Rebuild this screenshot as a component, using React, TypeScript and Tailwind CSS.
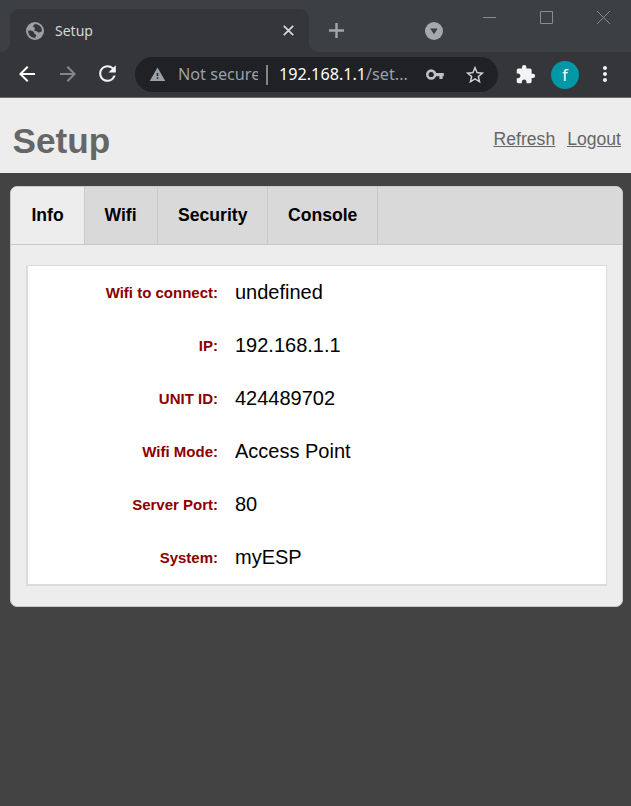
import React from "react";
import {
  MdArrowBack,
  MdArrowForward,
  MdRefresh,
  MdWarning,
  MdStarBorder,
  MdExtension,
  MdMoreVert,
} from "react-icons/md";

const tabs = [
  { name: "Info", box: "w-[74px] bg-[#ededed] pl-[20.4px]" },
  { name: "Wifi", box: "w-[73px] pl-[19.5px]" },
  { name: "Security", box: "w-[110px] pl-5" },
  { name: "Console", box: "w-[110px] pl-5" },
];

const rows: [string, string][] = [
  ["Wifi to connect:", "undefined"],
  ["IP:", "192.168.1.1"],
  ["UNIT ID:", "424489702"],
  ["Wifi Mode:", "Access Point"],
  ["Server Port:", "80"],
  ["System:", "myESP"],
];

function Globe() {
  return (
    <svg className="ml-px" width="18" height="18" viewBox="0 0 18 18">
      <circle cx="9" cy="9" r="9" fill="#9aa0a6" />
      <path
        d="M9.2 2.1C7.9 2.8 7 3.6 7.2 4.7c.2 1 1.7.5 1.9 1.5.2 1-1 1-1 1.9 0 .8.9 1 1.8 1 1.5 0 1.3 1.4 2.6 1.5 1.3.1 1.6-1.1 3.4-1.1.4-3.9-2.6-7.3-6.700-7.400z"
        fill="#35363a"
      />
      <path
        d="M2.1 8.6c1.6-.2 4.6.1 5.5 1.2.8 1 .2 1.800 1.100 2.200 1 .4 1.500.5 1.500 1.500 0 1.200-1 1.300-1 2.500C5.200 16 1.900 12.700 2.100 8.600z"
        fill="#35363a"
      />
    </svg>
  );
}

function TabStrip() {
  return (
    <div className="flex h-[52px] bg-[#3c4043]">
      <div className="flex w-[10px] bg-[#35363a]">
        <div className="w-full rounded-br-[9px] bg-[#3c4043]" />
      </div>
      <div className="mt-[9px] flex w-[299px] items-center rounded-t-[9px] bg-[#35363a] pl-[15px] pr-[15px]">
        <Globe />
        <span className="ml-[11px] flex-1 text-[14px] text-[#d5d7da]">Setup</span>
        <svg width="11" height="11" viewBox="0 0 11 11">
          <path d="M.8.8l9.4 9.4M10.2.8L.8 10.2" stroke="#d5d7da" strokeWidth="1.8" />
        </svg>
      </div>
      <div className="flex flex-1 bg-[#35363a]">
        <div className="flex flex-1 items-start rounded-bl-[9px] bg-[#3c4043]">
          <svg className="ml-[20px] mt-[23px]" width="15" height="15" viewBox="0 0 15 15">
            <path d="M7.5 0v15M0 7.5h15" stroke="#a3a6a9" strokeWidth="2.4" />
          </svg>
          <svg className="ml-[81px] mt-[22px]" width="18" height="18" viewBox="0 0 18 18">
            <circle cx="9" cy="9" r="9" fill="#a5a9ad" />
            <path d="M5.2 6.5h7.6L9 12.3z" fill="#3c4043" />
          </svg>
          <svg className="ml-[40px] mt-[11px]" width="13" height="13" viewBox="0 0 13 13">
            <path d="M0 6.5h13" stroke="#898b8d" />
          </svg>
          <svg className="ml-[44px] mt-[11px]" width="13" height="13" viewBox="0 0 13 13">
            <path d="M.5.5h12v12H.5z" fill="none" stroke="#898b8d" />
          </svg>
          <svg className="ml-[44px] mt-[11px]" width="13" height="13" viewBox="0 0 13 13">
            <path d="M0 0l13 13M13 0L0 13" stroke="#898b8d" />
          </svg>
        </div>
      </div>
    </div>
  );
}

function Toolbar() {
  return (
    <div className="flex h-[46px] items-center border-b border-[#6a6b6d] bg-[#35363a] pl-[15px]">
      <MdArrowBack className="mb-[2px] size-[24px] text-white" />
      <MdArrowForward className="mb-[2px] ml-[17px] size-[24px] text-[#85868a]" />
      <MdRefresh className="mb-[2px] ml-[15px] size-[25px] text-[#f1f3f4]" />
      <div className="ml-[15px] flex h-[35px] w-[363px] items-center rounded-full bg-[#202124] pl-[14px] text-[16.2px]">
        <MdWarning className="size-[17px] text-[#9aa0a6]" />
        <span className="ml-[12px] w-[80px] overflow-hidden whitespace-nowrap text-[#9aa0a6]">Not secure</span>
        <span className="ml-[8px] h-[20px] w-[2px] bg-[#828588]" />
        <span className="ml-[11px] w-[132px] whitespace-nowrap text-[#9aa0a6]">
          <span className="text-white">192.168.1.1</span>/set...
        </span>
        <svg className="ml-[15px]" width="18" height="12" viewBox="0 0 18 12">
          <circle cx="5.2" cy="5.5" r="3.9" fill="none" stroke="#bdc1c6" strokeWidth="2.6" />
          <path d="M8.8 4h9v3.2h-1.2v2.900h-3.200V7.200H8.800z" fill="#bdc1c6" />
        </svg>
        <MdStarBorder className="ml-[20px] size-[22px] text-[#d0d3d6]" />
      </div>
      <MdExtension className="ml-[17px] size-[21px] text-[#f1f3f4]" />
      <div className="ml-[15px] flex size-[28px] items-center justify-center rounded-full bg-[#0097a7] text-[16px] leading-none text-white">f</div>
      <MdMoreVert className="mb-px ml-[14px] size-[24px] text-[#f1f3f4]" />
    </div>
  );
}

export default function App() {
  return (
    <div className="flex h-[806px] w-[631px] flex-col overflow-hidden bg-[#434343] font-['Liberation_Sans',Arial,sans-serif]">
      <div className="font-['Noto_Sans',sans-serif]">
        <TabStrip />
        <Toolbar />
      </div>
      <header className="flex h-[75px] items-center justify-between bg-[#ededed] pl-[12.5px] pr-[10px] text-[#666]">
        <h1 className="mt-[11px] text-[35.2px] font-bold leading-[40px]">Setup</h1>
        <nav className="mt-[7px] flex gap-[12px] text-[17.6px] leading-[20px] underline">
          <a>Refresh</a>
          <a>Logout</a>
        </nav>
      </header>
      <main className="ml-[10px] mt-[13px] flex h-[421px] w-[613px] flex-col overflow-hidden rounded-[7px] border border-[#c9c9c9] bg-[#ededed]">
        <div className="flex h-[58px] border-b border-[#c9c9c9] bg-[#d9d9d9] text-[17.6px] font-bold text-black">
          {tabs.map((tab) => (
            <div key={tab.name} className={"flex items-center border-r border-[#c9c9c9] " + tab.box}>
              {tab.name}
            </div>
          ))}
        </div>
        <div className="mx-[15px] mt-[20px] flex h-[321px] flex-col border-b-2 border-l-2 border-r border-t border-[#dbdbdb] bg-white">
          {rows.map(([label, value]) => (
            <div key={label} className="flex h-[53px] items-center">
              <div className="w-[190px] pt-[2px] text-right text-[15px] font-bold text-[#8b0000]">{label}</div>
              <div className="ml-[17px] pb-[2px] text-[20px] text-black">{value}</div>
            </div>
          ))}
        </div>
      </main>
    </div>
  );
}
